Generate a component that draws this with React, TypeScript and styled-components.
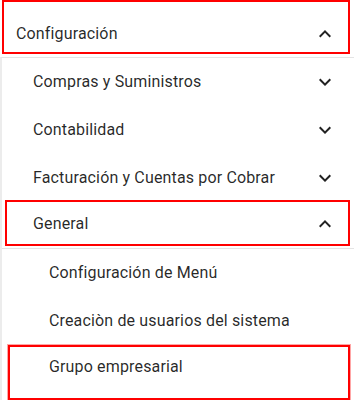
import React from "react";
import styled, { createGlobalStyle } from "styled-components";

const Global = createGlobalStyle`
  html, body { margin: 0; padding: 0; background: #ffffff; }
  body { font-family: Roboto, "Liberation Sans", Arial, sans-serif; overflow: hidden; }
  * { box-sizing: border-box; }
`;

const Sidebar = styled.nav`
  width: 354px;
  display: flex;
  flex-direction: column;
  background: #ffffff;
`;

const Highlight = styled.div<{
  $ml: number;
  $mt: number;
  $h: number;
  $pl: number;
  $pr: number;
  $pt?: number;
  $pb?: number;
  $thick?: boolean;
}>`
  display: flex;
  align-items: center;
  justify-content: space-between;
  border: 2px solid #ff0000;
  box-shadow: ${(p) => (p.$thick ? "0 0 0 1px rgba(255, 0, 0, 0.35)" : "none")};
  margin-left: ${(p) => p.$ml}px;
  margin-right: 4px;
  margin-top: ${(p) => p.$mt}px;
  height: ${(p) => p.$h}px;
  padding: ${(p) => p.$pt ?? 0}px ${(p) => p.$pr}px ${(p) => p.$pb ?? 0}px ${(p) => p.$pl}px;
  position: relative;
  z-index: 1;
`;

const Nested = styled.div`
  margin-top: 3px;
  border-top: 1px solid #e4e4e4;
  border-left: 2px solid #ececec;
  display: flex;
  flex-direction: column;
`;

const Row = styled.div<{ $indent: number }>`
  height: 48px;
  display: flex;
  align-items: center;
  justify-content: space-between;
  padding-left: ${(p) => p.$indent}px;
  padding-right: 17px;
`;

const Divider = styled.div`
  margin-top: 2px;
  height: 1px;
  background: #e4e4e4;
`;

const Label = styled.span`
  font-size: 16px;
  line-height: 24px;
  font-weight: 400;
  letter-spacing: 0.00938em;
  color: rgba(0, 0, 0, 0.85);
  white-space: nowrap;
`;

const Icon = styled.svg`
  width: 24px;
  height: 24px;
  flex: none;
  fill: rgba(0, 0, 0, 0.87);
`;

const ExpandLess = () => (
  <Icon viewBox="0 0 24 24">
    <path d="M12 8l-6 6 1.41 1.41L12 10.83l4.59 4.58L18 14z" />
  </Icon>
);

const ExpandMore = () => (
  <Icon viewBox="0 0 24 24">
    <path d="M16.59 8.59 12 13.17 7.41 8.59 6 10l6 6 6-6z" />
  </Icon>
);

const Spacer = styled.span``;

export default function App() {
  return (
    <>
      <Global />
      <Sidebar>
        <Highlight $ml={2} $mt={0} $h={54} $pl={12} $pr={11} $pt={14}>
          <Label>Configuración</Label>
          <ExpandLess />
        </Highlight>
        <Nested>
          <Row $indent={31}>
            <Label>Compras y Suministros</Label>
            <ExpandMore />
          </Row>
          <Row $indent={31}>
            <Label>Contabilidad</Label>
            <ExpandMore />
          </Row>
          <Row $indent={31}>
            <Label>Facturación y Cuentas por Cobrar</Label>
            <ExpandMore />
          </Row>
          <Highlight $ml={3} $mt={-2} $h={46} $pl={26} $pr={11} $pt={2}>
            <Label>General</Label>
            <ExpandLess />
          </Highlight>
          <Divider />
          <Row $indent={47}>
            <Label>Configuración de Menú</Label>
          </Row>
          <Row $indent={47}>
            <Label>Creaciòn de usuarios del sistema</Label>
          </Row>
          <Highlight $ml={6} $mt={0} $h={55} $pl={39} $pr={11} $pb={11} $thick>
            <Label>Grupo empresarial</Label>
            <Spacer />
          </Highlight>
        </Nested>
      </Sidebar>
    </>
  );
}
